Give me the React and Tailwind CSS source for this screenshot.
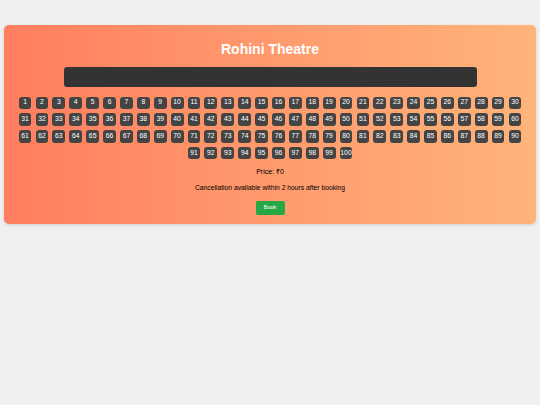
export default function App() {
  const asientos = Array.from({ length: 100 }, (_, i) => i + 1);

  return (
    <div className="min-h-screen bg-[#f0f0f0] px-1 pt-[25px] font-['Liberation_Sans',Arial,sans-serif]">
      <div className="rounded-[5px] bg-gradient-to-r from-[#ff7e5f] to-[#feb47b] px-2 pt-[16px] pb-[8px] text-center shadow-[0_1px_3px_rgba(0,0,0,0.15)]">
        <h1 className="text-[14px] leading-[16px] font-bold text-white">Rohini Theatre</h1>

        {/* Pantalla */}
        <div className="mx-auto mt-[10px] h-[20px] w-[413px] rounded-[3px] bg-[#333]"></div>

        {/* Asientos */}
        <div className="mt-[7.5px] flex flex-wrap justify-center">
          {asientos.map((n) => (
            <div
              key={n}
              className="mx-[2.05px] my-[2px] flex h-[12.7px] w-[12.8px] items-center justify-center rounded-[3px] bg-[#444] text-[6.8px] leading-none text-white"
            >
              {n}
            </div>
          ))}
        </div>

        <p className="mt-[5.5px] text-[7px] leading-[9px] text-black">Price: ₹0</p>
        <p className="mt-[7px] text-[6.75px] leading-[9px] text-black">
          Cancellation available within 2 hours after booking
        </p>
        <button className="mt-[7.5px] h-[14px] w-[29px] rounded-[2px] bg-[#28a745] text-[5.5px] leading-none text-white">
          Book
        </button>
      </div>
    </div>
  );
}
